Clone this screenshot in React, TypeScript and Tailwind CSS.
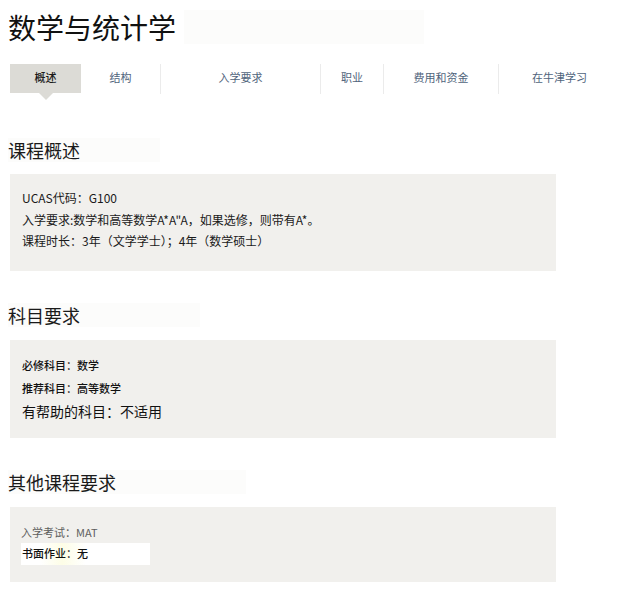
import React from "react";

const tabs = [
  { label: "概述", width: "w-[71px]", active: true, divider: false },
  { label: "结构", width: "w-[79px]", active: false, divider: false },
  { label: "入学要求", width: "w-[160px]", active: false, divider: true },
  { label: "职业", width: "w-[63px]", active: false, divider: true },
  { label: "费用和资金", width: "w-[115px]", active: false, divider: true },
  { label: "在牛津学习", width: "w-[122px]", active: false, divider: true },
];

const Heading = ({ text, band }: { text: string; band: string }) => (
  <div className="pl-[8px]">
    <h2
      className={`${band} h-[24px] bg-[#fcfcfb] text-[18px] leading-[24px] text-[#1a1a1a]`}
    >
      {text}
    </h2>
  </div>
);

export default function App() {
  return (
    <div
      className="w-[620px] h-[589px] bg-white overflow-hidden"
      style={{ fontFamily: '"Noto Sans CJK SC", "Noto Sans", sans-serif' }}
    >
      {/* Title */}
      <div className="flex items-center pt-[9px] pl-[8px] h-[45px]">
        <h1 className="text-[28px] leading-[36px] text-[#111]">数学与统计学</h1>
        <div className="ml-[8px] w-[240px] h-[34px] bg-[#fcfcfb]" />
      </div>

      {/* Tabs */}
      <div className="mt-[19px] ml-[10px] flex h-[30px]">
        {tabs.map((tab) => (
          <div
            key={tab.label}
            className={`relative ${tab.width} flex items-center justify-center pb-[3px] text-[11px] ${
              tab.divider ? "border-l border-[#ebebeb]" : ""
            } ${
              tab.active
                ? "bg-[#dcdbd6] text-[#1a1a1a] font-medium h-[29px]"
                : "text-[#50647c]"
            }`}
          >
            {tab.label}
            {tab.active && (
              <span className="absolute left-[29px] top-[29px] w-0 h-0 border-l-[7px] border-r-[7px] border-t-[7px] border-l-transparent border-r-transparent border-t-[#dcdbd6]" />
            )}
          </div>
        ))}
      </div>

      {/* 课程概述 */}
      <div className="mt-[44px]">
        <Heading text="课程概述" band="w-[152px]" />
      </div>
      <div className="mt-[12px] mx-[10px] w-[546px] bg-[#f1f0ed] pt-[13px] pb-[19px] pl-[12px] text-[12px] leading-[21.5px] text-[#1a1a1a]">
        <p>UCAS代码：G100</p>
        <p>入学要求:数学和高等数学A*A"A，如果选修，则带有A*。</p>
        <p>课程时长：3年（文学学士）；4年（数学硕士）</p>
      </div>

      {/* 科目要求 */}
      <div className="mt-[32px]">
        <Heading text="科目要求" band="w-[192px]" />
      </div>
      <div className="mt-[13px] mx-[10px] w-[546px] bg-[#f1f0ed] pt-[14px] pb-[15px] pl-[12px] text-[#111]">
        <p className="text-[11px] leading-[23px] font-medium">必修科目：数学</p>
        <p className="text-[11px] leading-[23px] font-medium">推荐科目：高等数学</p>
        <p className="text-[14px] leading-[23px]">有帮助的科目：不适用</p>
      </div>

      {/* 其他课程要求 */}
      <div className="mt-[32px]">
        <Heading text="其他课程要求" band="w-[238px]" />
      </div>
      <div className="mt-[13px] mx-[10px] w-[546px] bg-[#f1f0ed] pt-[15px] pb-[17px] pl-[11px] text-[11px] leading-[21.5px]">
        <p className="text-[#5e5e5e]">入学考试：MAT</p>
        <p>
          <span className="inline-block w-[129px] pl-[1px] bg-[linear-gradient(90deg,#ffffff_15%,#fdfde6_32%,#ffffff_50%)] font-medium text-[#111]">
            书面作业：无
          </span>
        </p>
      </div>
    </div>
  );
}
